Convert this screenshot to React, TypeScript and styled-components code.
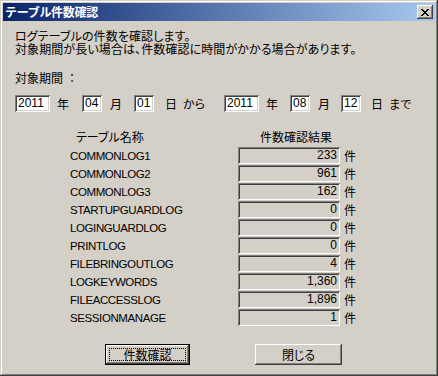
import React from "react";
import styled, { createGlobalStyle } from "styled-components";

const GlobalStyle = createGlobalStyle`
  html, body {
    margin: 0;
    padding: 0;
    background: #d4d0c8;
  }
  body {
    font-family: "Noto Sans CJK JP", "Liberation Sans", sans-serif;
    font-size: 12px;
    color: #000;
  }
`;

type Row = { name: string; count: string };

const rows: Row[] = [
  { name: "COMMONLOG1", count: "233" },
  { name: "COMMONLOG2", count: "961" },
  { name: "COMMONLOG3", count: "162" },
  { name: "STARTUPGUARDLOG", count: "0" },
  { name: "LOGINGUARDLOG", count: "0" },
  { name: "PRINTLOG", count: "0" },
  { name: "FILEBRINGOUTLOG", count: "4" },
  { name: "LOGKEYWORDS", count: "1,360" },
  { name: "FILEACCESSLOG", count: "1,896" },
  { name: "SESSIONMANAGE", count: "1" }
];

export default function App() {
  return (
    <>
      <GlobalStyle />
      <Window>
        <TitleBar>
          <Title>テーブル件数確認</Title>
          <CloseButton>
            <svg width="8" height="7" viewBox="0 0 8 7">
              <path
                d="M0 0h2v1h1v1h2V1h1V0h2v1H7v1H6v1H5v1h1v1h1v1h1v1H6V6H5V5H3v1H2v1H0V6h1V5h1V4h1V3H2V2H1V1H0z"
                fill="#000"
              />
            </svg>
          </CloseButton>
        </TitleBar>
        <Content>
          <Message>
            <MessageLine>ログテーブルの件数を確認します。</MessageLine>
            <MessageLine>
              対象期間が長い場合は、件数確認に時間がかかる場合があります。
            </MessageLine>
          </Message>
          <PeriodLabel>
            対象期間<Colon>：</Colon>
          </PeriodLabel>
          <DateRow>
            <Field $w={35}>2011</Field>
            <Unit $w={32} $pad={7}>年</Unit>
            <Field $w={20}>04</Field>
            <Unit $w={32} $pad={8}>月</Unit>
            <Field $w={20}>01</Field>
            <Unit $w={70} $pad={11}>
              日<Suffix>から</Suffix>
            </Unit>
            <Field $w={35}>2011</Field>
            <Unit $w={31} $pad={7}>年</Unit>
            <Field $w={20}>08</Field>
            <Unit $w={31} $pad={8}>月</Unit>
            <Field $w={20}>12</Field>
            <Unit $w={70} $pad={10}>
              日<Suffix>まで</Suffix>
            </Unit>
          </DateRow>
          <TableHeader>
            <HeaderName>テーブル名称</HeaderName>
            <HeaderResult>件数確認結果</HeaderResult>
          </TableHeader>
          <Rows>
            {rows.map(r => (
              <ResultRow key={r.name}>
                <TableName>{r.name}</TableName>
                <ResultBox>{r.count}</ResultBox>
                <Ken>件</Ken>
              </ResultRow>
            ))}
          </Rows>
          <ButtonRow>
            <Button $w={85} $default>
              件数確認
            </Button>
            <Button $w={87}>閉じる</Button>
          </ButtonRow>
        </Content>
      </Window>
    </>
  );
}

const Window = styled.div`
  width: 438px;
  height: 376px;
  box-sizing: border-box;
  padding: 3px;
  background: #d4d0c8;
  box-shadow: inset -1px -1px #404040, inset 1px 1px #d4d0c8,
    inset -2px -2px #808080, inset 2px 2px #ffffff;
  display: flex;
  flex-direction: column;
  overflow: hidden;
`;

const TitleBar = styled.div`
  height: 18px;
  flex-shrink: 0;
  display: flex;
  align-items: center;
  justify-content: space-between;
  padding: 0 2px 0 2px;
  background: linear-gradient(to right, #0a246a, #a6caf0);
`;

const Title = styled.div`
  color: #fff;
  font-weight: bold;
  font-size: 12px;
  line-height: 18px;
  letter-spacing: -0.3px;
`;

const CloseButton = styled.div`
  width: 16px;
  height: 14px;
  box-sizing: border-box;
  background: #d4d0c8;
  display: flex;
  align-items: center;
  justify-content: center;
  box-shadow: inset -1px -1px #404040, inset 1px 1px #ffffff,
    inset -2px -2px #808080;
`;

const Content = styled.div`
  display: flex;
  flex-direction: column;
  padding-left: 12px;
  font-feature-settings: "palt";
`;

const Message = styled.div`
  margin-top: 9px;
  display: flex;
  flex-direction: column;
`;

const MessageLine = styled.div`
  height: 12px;
  line-height: 12px;
  margin-bottom: 1px;
  letter-spacing: 0.1px;
  white-space: nowrap;
`;

const PeriodLabel = styled.div`
  margin-top: 15px;
  line-height: 13px;
`;

const Colon = styled.span`
  margin-left: 6px;
`;

const DateRow = styled.div`
  margin-top: 11px;
  display: flex;
  align-items: center;
  height: 17px;
`;

const Field = styled.div<{ $w: number }>`
  width: ${p => p.$w}px;
  height: 17px;
  box-sizing: border-box;
  padding: 0 3px;
  background: #fff;
  font-family: "Liberation Sans", sans-serif;
  font-size: 12px;
  line-height: 17px;
  box-shadow: inset 1px 1px #808080, inset -1px -1px #ffffff,
    inset 2px 2px #404040, inset -2px -2px #d4d0c8;
`;

const Unit = styled.div<{ $w: number; $pad: number }>`
  width: ${p => p.$w}px;
  box-sizing: border-box;
  padding-left: ${p => p.$pad}px;
  line-height: 17px;
  white-space: nowrap;
`;

const Suffix = styled.span`
  margin-left: 6px;
`;

const TableHeader = styled.div`
  margin-top: 18px;
  display: flex;
  line-height: 13px;
  padding-left: 58px;
`;

const HeaderName = styled.div`
  width: 168px;
  box-sizing: border-box;
  padding-left: 3px;
`;

const HeaderResult = styled.div`
  padding-left: 19px;
`;

const Rows = styled.div`
  margin-top: 4px;
  display: flex;
  flex-direction: column;
  padding-left: 55px;
`;

const ResultRow = styled.div`
  display: flex;
  align-items: center;
  height: 17px;
  margin-bottom: 1px;
`;

const TableName = styled.div`
  width: 168px;
  font-family: "Liberation Sans", sans-serif;
  font-size: 11.5px;
  letter-spacing: -0.4px;
`;

const ResultBox = styled.div`
  width: 102px;
  height: 17px;
  box-sizing: border-box;
  padding-right: 3px;
  text-align: right;
  font-family: "Liberation Sans", sans-serif;
  font-size: 12px;
  line-height: 17px;
  box-shadow: inset 1px 1px #808080, inset -1px -1px #ffffff,
    inset 2px 2px #404040, inset -2px -2px #d4d0c8;
`;

const Ken = styled.div`
  margin-left: 4px;
`;

const ButtonRow = styled.div`
  margin-top: 17px;
  display: flex;
  gap: 65px;
  padding-left: 90px;
`;

const Button = styled.div<{ $w: number; $default?: boolean }>`
  position: relative;
  width: ${p => p.$w}px;
  height: 21px;
  box-sizing: border-box;
  display: flex;
  align-items: center;
  justify-content: center;
  background: #d4d0c8;
  box-shadow: ${p =>
    p.$default
      ? "inset 0 0 0 1px #000, inset -2px -2px #404040, inset 2px 2px #ffffff, inset -3px -3px #808080"
      : "inset -1px -1px #404040, inset 1px 1px #ffffff, inset -2px -2px #808080"};

  &::after {
    content: "";
    display: ${p => (p.$default ? "block" : "none")};
    position: absolute;
    inset: 4px;
    border: 1px dotted #000;
  }
`;
